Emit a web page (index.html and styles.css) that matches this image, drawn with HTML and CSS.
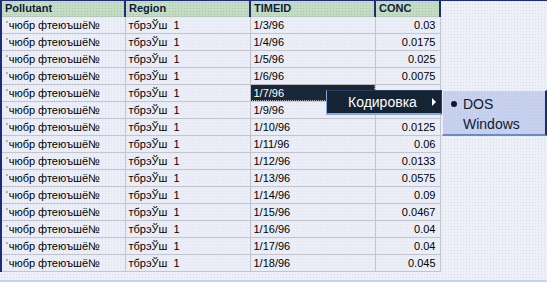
FILE: index.html
```html
<!DOCTYPE html>
<html>
<head>
<meta charset="utf-8">
<link rel="stylesheet" href="styles.css">
</head>
<body>
<div class="page">
  <table class="grid">
    <colgroup>
      <col class="c1"><col class="c2"><col class="c3"><col class="c4">
    </colgroup>
    <thead>
      <tr><th>Pollutant</th><th>Region</th><th>TIMEID</th><th class="last">CONC</th></tr>
    </thead>
    <tbody>
      <tr><td>ˈчюбр фтеюъшё№</td><td>тбрэЎш&nbsp;&nbsp;1</td><td>1/3/96</td><td class="num">0.03</td></tr>
      <tr><td>ˈчюбр фтеюъшё№</td><td>тбрэЎш&nbsp;&nbsp;1</td><td>1/4/96</td><td class="num">0.0175</td></tr>
      <tr><td>ˈчюбр фтеюъшё№</td><td>тбрэЎш&nbsp;&nbsp;1</td><td>1/5/96</td><td class="num">0.025</td></tr>
      <tr><td>ˈчюбр фтеюъшё№</td><td>тбрэЎш&nbsp;&nbsp;1</td><td>1/6/96</td><td class="num">0.0075</td></tr>
      <tr><td>ˈчюбр фтеюъшё№</td><td>тбрэЎш&nbsp;&nbsp;1</td><td class="sel">1/7/96</td><td class="num"></td></tr>
      <tr><td>ˈчюбр фтеюъшё№</td><td>тбрэЎш&nbsp;&nbsp;1</td><td>1/9/96</td><td class="num"></td></tr>
      <tr><td>ˈчюбр фтеюъшё№</td><td>тбрэЎш&nbsp;&nbsp;1</td><td>1/10/96</td><td class="num">0.0125</td></tr>
      <tr><td>ˈчюбр фтеюъшё№</td><td>тбрэЎш&nbsp;&nbsp;1</td><td>1/11/96</td><td class="num">0.06</td></tr>
      <tr><td>ˈчюбр фтеюъшё№</td><td>тбрэЎш&nbsp;&nbsp;1</td><td>1/12/96</td><td class="num">0.0133</td></tr>
      <tr><td>ˈчюбр фтеюъшё№</td><td>тбрэЎш&nbsp;&nbsp;1</td><td>1/13/96</td><td class="num">0.0575</td></tr>
      <tr><td>ˈчюбр фтеюъшё№</td><td>тбрэЎш&nbsp;&nbsp;1</td><td>1/14/96</td><td class="num">0.09</td></tr>
      <tr><td>ˈчюбр фтеюъшё№</td><td>тбрэЎш&nbsp;&nbsp;1</td><td>1/15/96</td><td class="num">0.0467</td></tr>
      <tr><td>ˈчюбр фтеюъшё№</td><td>тбрэЎш&nbsp;&nbsp;1</td><td>1/16/96</td><td class="num">0.04</td></tr>
      <tr><td>ˈчюбр фтеюъшё№</td><td>тбрэЎш&nbsp;&nbsp;1</td><td>1/17/96</td><td class="num">0.04</td></tr>
      <tr><td>ˈчюбр фтеюъшё№</td><td>тбрэЎш&nbsp;&nbsp;1</td><td>1/18/96</td><td class="num">0.045</td></tr>
    </tbody>
  </table>
  <div class="bottom-line"></div>

  <div class="menu">
    <span class="menu-label">Кодировка</span>
    <span class="menu-arrow"></span>
  </div>
  <div class="submenu">
    <div class="sub-item"><span class="bullet"></span>DOS</div>
    <div class="sub-item">Windows</div>
  </div>
</div>
</body>
</html>
```
FILE: styles.css
```css
html, body {
  margin: 0;
  padding: 0;
}
body {
  width: 547px;
  height: 282px;
  overflow: hidden;
  background-color: #eef0f8;
  background-image: radial-gradient(circle, rgba(150,160,200,0.25) 0.6px, transparent 0.8px);
  background-size: 3px 3px;
  font-family: "Liberation Sans", Arial, sans-serif;
}
.page {
  position: relative;
  width: 547px;
  height: 282px;
  border-top: 1px solid #1c2c78;
  box-sizing: border-box;
}
.grid {
  border-collapse: collapse;
  table-layout: fixed;
  width: 441px;
  border-left: 2px solid #1c2c78;
  font-size: 11px;
  color: #000;
}
.c1 { width: 124px; }
.c2 { width: 125px; }
.c3 { width: 125px; }
.c4 { width: 65px; }

th {
  height: 15px;
  padding: 0 3px;
  text-align: left;
  font-weight: bold;
  color: #0e1e3c;
  background-color: #c4dcc4;
  background-image: radial-gradient(circle, rgba(120,160,120,0.35) 0.6px, transparent 0.8px);
  background-size: 3px 3px;
  border-left: 2px solid #1c2c78;
  border-right: 1px solid #d8e4d8;
  border-bottom: 1px solid #b8c8b8;
  line-height: 14px;
  white-space: nowrap;
  box-sizing: border-box;
}
th:first-child { border-left: none; }
th.last { border-right: 2px solid #1c2c78; }

td {
  height: 16px;
  padding: 0 3px 0 3px;
  border: 1px solid #c4c4cc;
  line-height: 16px;
  white-space: nowrap;
  overflow: hidden;
  background-color: #edeff8;
  background-image: radial-gradient(circle, rgba(150,160,200,0.25) 0.6px, transparent 0.8px);
  background-size: 3px 3px;
}
td:first-child { border-left: none; padding-left: 3px; }
td.num { text-align: right; padding-right: 4px; }
td.sel {
  background: #182838;
  color: #ffffff;
  outline: 1px dotted #b0b0b0;
  outline-offset: -1px;
}

.bottom-line {
  position: absolute;
  left: 0;
  right: 0;
  top: 279px;
  height: 2px;
  background: #c4d4f0;
}

.menu {
  position: absolute;
  left: 326px;
  top: 89px;
  width: 116px;
  height: 25px;
  box-sizing: border-box;
  background: #142434;
  border: 1px solid #2c3c5c;
  border-left-color: #8ea6e0;
  border-bottom: 2px solid #8ea6e0;
  display: flex;
  align-items: center;
  color: #ffffff;
  font-size: 14px;
}
.menu-label {
  margin-left: 21px;
}
.menu-arrow {
  margin-left: 15px;
  width: 0;
  height: 0;
  border-top: 4px solid transparent;
  border-bottom: 4px solid transparent;
  border-left: 4px solid #ffffff;
}

.submenu {
  position: absolute;
  left: 442px;
  top: 89px;
  width: 105px;
  height: 46px;
  box-sizing: border-box;
  background-color: #c2cff0;
  background-image: radial-gradient(circle, rgba(240,220,180,0.6) 0.6px, transparent 0.8px);
  background-size: 3px 3px;
  border-top: 1px solid #e8eeff;
  border-left: 1px solid #e8eeff;
  border-right: 2px solid #1c2c78;
  border-bottom: 2px solid #7088c8;
  padding-top: 3px;
  color: #101830;
  font-size: 14px;
}
.sub-item {
  height: 20px;
  line-height: 20px;
  padding-left: 20px;
  position: relative;
}
.bullet {
  position: absolute;
  left: 8px;
  top: 7px;
  width: 6px;
  height: 6px;
  border-radius: 50%;
  background: #101830;
}
```
